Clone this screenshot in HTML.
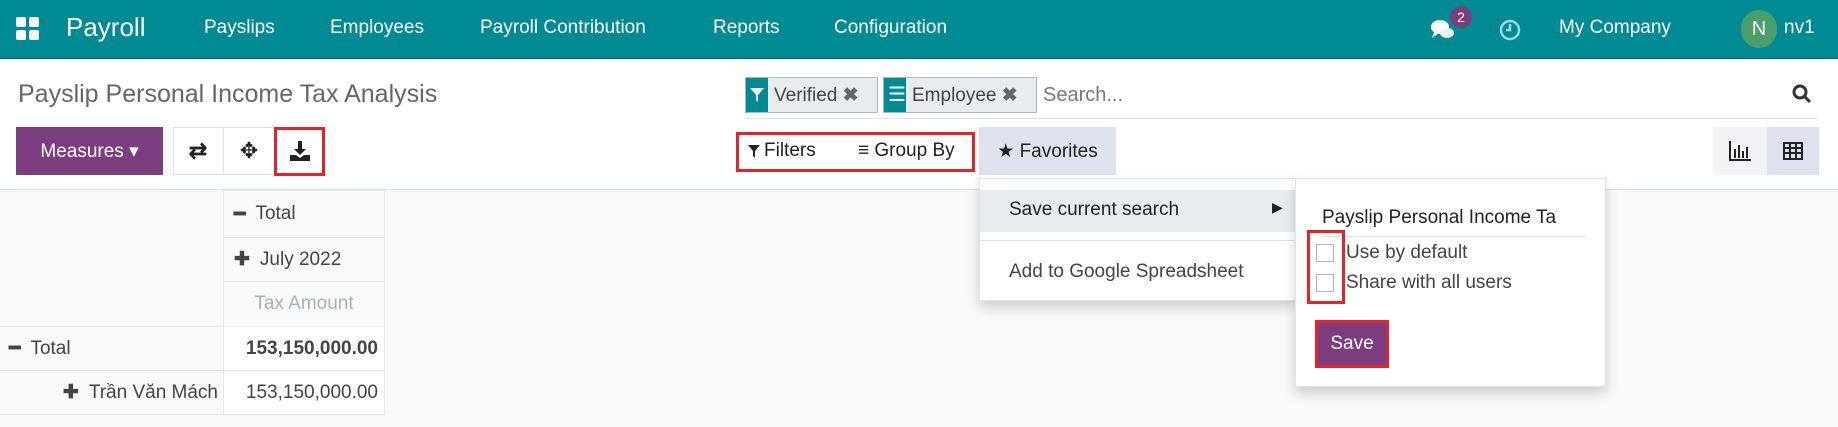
<!DOCTYPE html>
<html><head><meta charset="utf-8"><style>
*{box-sizing:border-box;margin:0;padding:0}
body{width:1838px;height:427px;overflow:hidden;background:#f8f9fa;font-family:"Liberation Sans",sans-serif;position:relative;color:#4c4c4c}
.a{position:absolute;white-space:nowrap}
.nav{left:0;top:0;width:1838px;height:59px;background:#008b94;border-bottom:1px solid #0b5f66}
.nav .a{color:#fff;font-size:19px;top:17px}
.top{left:0;top:59px;width:1838px;height:131px;background:#fff;border-bottom:1px solid #dee2e6}
.btn{height:48px;top:127px;display:flex;align-items:center;justify-content:center;font-size:19px}
.cell{position:absolute;border:1px solid #e5e7ea;font-size:19px;display:flex;align-items:center;padding:0 10px;color:#444}
.red{border:3px solid #e0242a;position:absolute}
.cb{position:absolute;width:18px;height:18px;border:1px solid #adb5bd;background:#fff}
</style></head><body>
<div class="a nav">
  <svg class="a" style="left:16px;top:17px" width="24" height="24" viewBox="0 0 24 24" fill="#fff"><rect x="0" y="0" width="10" height="10" rx="2"/><rect x="13" y="0" width="10" height="10" rx="2"/><rect x="0" y="13" width="10" height="10" rx="2"/><rect x="13" y="13" width="10" height="10" rx="2"/></svg>
  <div class="a" style="left:66px;top:12px;font-size:26px">Payroll</div>
  <div class="a" style="left:204px">Payslips</div>
  <div class="a" style="left:330px">Employees</div>
  <div class="a" style="left:480px">Payroll Contribution</div>
  <div class="a" style="left:713px">Reports</div>
  <div class="a" style="left:834px">Configuration</div>
  <svg class="a" style="left:1430px;top:16px" width="26" height="26" viewBox="0 0 26 26" fill="#fff"><ellipse cx="10" cy="11" rx="9" ry="7"/><path d="M4 16 L2 22 L9 17Z"/><ellipse cx="17" cy="17" rx="7" ry="5" fill="#e6f4f5"/></svg>
  <div class="a" style="left:1450px;top:6px;width:22px;height:22px;border-radius:11px;background:#7a3e7d;font-size:14px;text-align:center;line-height:22px">2</div>
  <svg class="a" style="left:1498px;top:18px" width="24" height="24" viewBox="0 0 24 24" fill="none" stroke="#9fd6da" stroke-width="2.5"><circle cx="12" cy="12" r="9"/><path d="M12 6v6h-4"/></svg>
  <div class="a" style="left:1559px">My Company</div>
  <div class="a" style="left:1741px;top:10px;width:36px;height:38px;border-radius:19px;background:#4a9e6b;text-align:center;line-height:38px;font-size:20px">N</div>
  <div class="a" style="left:1784px">nv1</div>
</div>
<div class="a top"></div>
<div class="a" style="left:18px;top:80px;font-size:25px;color:#666">Payslip Personal Income Tax Analysis</div>
<div class="a" style="left:745px;top:77px;width:133px;height:36px;border:1px solid #adb5bd;background:#e9ecef"><div class="a" style="left:0;top:0;width:22px;height:34px;background:#008b94"></div><svg class="a" style="left:4px;top:10px" width="14" height="14" viewBox="0 0 14 14" fill="#fff"><path d="M0 0h14L8 7v7L6 12V7Z"/></svg><div class="a" style="left:28px;top:6px;font-size:19px;color:#444">Verified <b style="color:#666">✖</b></div></div>
<div class="a" style="left:883px;top:77px;width:154px;height:36px;border:1px solid #adb5bd;background:#e9ecef"><div class="a" style="left:0;top:0;width:22px;height:34px;background:#008b94"></div><div class="a" style="left:4px;top:4px;color:#fff;font-size:20px">☰</div><div class="a" style="left:28px;top:6px;font-size:19px;color:#444">Employee <b style="color:#666">✖</b></div></div>
<div class="a" style="left:1043px;top:84px;font-size:20px;color:#777">Search...</div>
<svg class="a" style="left:1792px;top:84px" width="20" height="20" viewBox="0 0 20 20" fill="none" stroke="#333" stroke-width="3"><circle cx="8" cy="8" r="6"/><path d="M12.5 12.5L18 18"/></svg>
<div class="a" style="left:745px;top:118px;width:1072px;height:1px;background:#dee2e6"></div>
<div class="a btn" style="left:16px;width:147px;background:#7c3d7f;color:#fff">Measures ▾</div>
<div class="a btn" style="left:173px;width:152px;border:1px solid #dee2e6;background:#fff"></div>
<div class="a btn" style="left:173px;width:50px;font-size:22px;font-weight:bold;color:#222">⇄</div>
<div class="a btn" style="left:223px;width:51px;border-left:1px solid #dee2e6;font-size:22px;color:#222">✥</div>
<svg class="a" style="left:290px;top:141px" width="20" height="20" viewBox="0 0 20 20" fill="#222"><path d="M8 0h4v8h4l-6 6-6-6h4z"/><path d="M0 14h6l4 3 4-3h6v6H0z"/></svg>
<div class="red" style="left:274px;top:127px;width:51px;height:49px"></div>
<div class="a btn" style="left:748px;width:90px;color:#222;justify-content:flex-start"><svg width="12" height="13" viewBox="0 0 12 13" fill="#222" style="margin-right:4px"><path d="M0 0h12L7 6v7L5 11V6Z"/></svg>Filters</div>
<div class="a btn" style="left:858px;width:112px;color:#222;justify-content:flex-start">≡ Group By</div>
<div class="red" style="left:736px;top:132px;width:239px;height:40px"></div>
<div class="a btn" style="left:979px;width:137px;background:#dee2ec;color:#222">★ Favorites</div>
<div class="a btn" style="left:1713px;width:54px;background:#f2f3f6;color:#222">
<svg width="22" height="20" viewBox="0 0 22 20" fill="#222"><path d="M0 0h2v18h20v2H0z"/><rect x="5" y="8" width="2" height="9"/><rect x="9" y="4" width="2" height="13"/><rect x="13" y="10" width="2" height="7"/><rect x="17" y="6" width="2" height="11"/></svg></div>
<div class="a btn" style="left:1767px;width:52px;background:#dee2ec">
<svg width="20" height="18" viewBox="0 0 20 18" fill="none" stroke="#222" stroke-width="2"><rect x="1" y="1" width="18" height="16"/><path d="M1 6h18M1 11h18M7 1v16M13 1v16"/></svg></div>
<div class="cell" style="left:223px;top:190px;width:162px;height:48px;background:#f8f9fa"><b style="margin-right:10px">━</b>Total</div>
<div class="cell" style="left:223px;top:237px;width:162px;height:45px;background:#f8f9fa"><b style="margin-right:10px">✚</b>July 2022</div>
<div class="cell" style="left:223px;top:281px;width:162px;height:46px;background:#f8f9fa;color:#aab0b6;justify-content:center">Tax Amount</div>
<div class="cell" style="left:-2px;top:326px;width:226px;height:45px;background:#f8f9fa;border-right:none"><b style="margin-right:10px">━</b>Total</div>
<div class="cell" style="left:223px;top:326px;width:162px;height:45px;background:#fff;font-weight:bold;justify-content:flex-end;padding:0 6px">153,150,000.00</div>
<div class="cell" style="left:-2px;top:370px;width:226px;height:45px;background:#f8f9fa;justify-content:flex-end;padding-right:6px;border-right:none"><b style="margin-right:10px">✚</b>Trần Văn Mách</div>
<div class="cell" style="left:223px;top:370px;width:162px;height:45px;background:#fff;justify-content:flex-end;padding:0 6px">153,150,000.00</div>
<div class="a" style="left:979px;top:178px;width:317px;height:123px;background:#fff;border:1px solid #e3e3e3;box-shadow:0 6px 12px rgba(0,0,0,.18)">
  <div class="a" style="left:0;top:11px;width:315px;height:42px;background:#e9ecef"></div>
  <div class="a" style="left:29px;top:20px;font-size:19px;color:#222">Save current search</div>
  <div class="a" style="left:292px;top:20px;font-size:14px;color:#222">▶</div>
  <div class="a" style="left:0;top:61px;width:315px;height:1px;background:#dee2e6"></div>
  <div class="a" style="left:29px;top:82px;font-size:19px;color:#444">Add to Google Spreadsheet</div>
</div>
<div class="a" style="left:1295px;top:178px;width:311px;height:209px;background:#fff;border:1px solid #e3e3e3;box-shadow:0 6px 12px rgba(0,0,0,.18)">
  <div class="a" style="left:26px;top:28px;font-size:19px;color:#222">Payslip Personal Income Ta</div>
  <div class="a" style="left:26px;top:57px;width:264px;height:1px;background:#dee2e6"></div>
  <div class="cb" style="left:20px;top:65px"></div>
  <div class="a" style="left:50px;top:63px;font-size:19px;color:#444">Use by default</div>
  <div class="cb" style="left:20px;top:95px"></div>
  <div class="a" style="left:50px;top:93px;font-size:19px;color:#444">Share with all users</div>
</div>
<div class="red" style="left:1307px;top:230px;width:38px;height:74px"></div>
<div class="a" style="left:1315px;top:320px;width:74px;height:48px;border:3px solid #e0242a;background:#7c3d7f;color:#fff;font-size:19px;text-align:center;line-height:42px">Save</div>
</body></html>
